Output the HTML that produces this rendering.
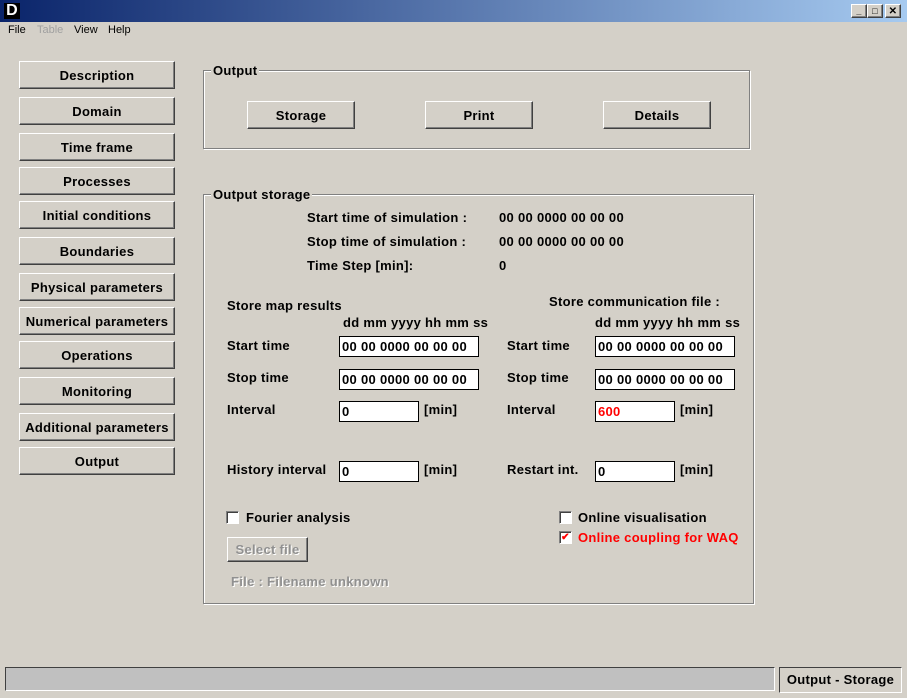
<html><head><style>
body{margin:0;width:907px;height:698px;background:#d4d0c8;font-family:"Liberation Sans",sans-serif;font-size:13px;font-weight:bold;position:relative;overflow:hidden;letter-spacing:0.3px}
.a{position:absolute;white-space:nowrap}
.btn{position:absolute;box-sizing:border-box;background:#d4d0c8;border:1px solid;border-color:#fff #404040 #404040 #fff;box-shadow:inset -1px -1px #808080;text-align:center;display:flex;align-items:center;justify-content:center}
.grp{position:absolute;border:1px solid #808080;box-shadow:1px 1px #fff, inset 1px 1px #fff}
.lg{position:absolute;top:-8px;left:7px;background:#d4d0c8;padding:0 2px}
.in{position:absolute;box-sizing:border-box;background:#fff;border:1px solid #000;height:21px;padding:2px 2px;line-height:15px}
.cb{position:absolute;width:13px;height:13px;box-sizing:border-box;background:#fff;border:1px solid;border-color:#808080 #fff #fff #808080;box-shadow:inset 1px 1px #404040}
</style></head><body>
<div class="a" style="left:0;top:0;width:907px;height:22px;background:linear-gradient(90deg,#0a246a,#a6caf0)"></div>
<div class="a" style="left:4px;top:3px;width:16px;height:16px;background:#000;color:#fff;font-size:16px;line-height:16px;text-align:center">D</div>
<div class="btn" style="left:851px;top:4px;width:16px;height:14px;font-size:9px">_</div>
<div class="btn" style="left:867px;top:4px;width:16px;height:14px;font-size:9px">□</div>
<div class="btn" style="left:885px;top:4px;width:16px;height:14px;font-size:10px">✕</div>
<div class="a" style="left:8px;top:24px;font-weight:normal;font-size:11px;letter-spacing:0">File</div>
<div class="a" style="left:37px;top:24px;font-weight:normal;font-size:11px;color:#a0a0a0;letter-spacing:0">Table</div>
<div class="a" style="left:74px;top:24px;font-weight:normal;font-size:11px;letter-spacing:0">View</div>
<div class="a" style="left:108px;top:24px;font-weight:normal;font-size:11px;letter-spacing:0">Help</div>

<div class="btn" style="left:19px;top:61px;width:156px;height:28px">Description</div>
<div class="btn" style="left:19px;top:97px;width:156px;height:28px">Domain</div>
<div class="btn" style="left:19px;top:133px;width:156px;height:28px">Time frame</div>
<div class="btn" style="left:19px;top:167px;width:156px;height:28px">Processes</div>
<div class="btn" style="left:19px;top:201px;width:156px;height:28px">Initial conditions</div>
<div class="btn" style="left:19px;top:237px;width:156px;height:28px">Boundaries</div>
<div class="btn" style="left:19px;top:273px;width:156px;height:28px">Physical parameters</div>
<div class="btn" style="left:19px;top:307px;width:156px;height:28px">Numerical parameters</div>
<div class="btn" style="left:19px;top:341px;width:156px;height:28px">Operations</div>
<div class="btn" style="left:19px;top:377px;width:156px;height:28px">Monitoring</div>
<div class="btn" style="left:19px;top:413px;width:156px;height:28px">Additional parameters</div>
<div class="btn" style="left:19px;top:447px;width:156px;height:28px">Output</div>

<div class="grp" style="left:203px;top:70px;width:545px;height:77px"><span class="lg">Output</span></div>
<div class="btn" style="left:247px;top:101px;width:108px;height:28px">Storage</div>
<div class="btn" style="left:425px;top:101px;width:108px;height:28px">Print</div>
<div class="btn" style="left:603px;top:101px;width:108px;height:28px">Details</div>

<div class="grp" style="left:203px;top:194px;width:549px;height:408px"><span class="lg">Output storage</span></div>
<div class="a" style="left:307px;top:210px">Start time of simulation :</div>
<div class="a" style="left:499px;top:210px">00 00 0000 00 00 00</div>
<div class="a" style="left:307px;top:234px">Stop time of simulation :</div>
<div class="a" style="left:499px;top:234px">00 00 0000 00 00 00</div>
<div class="a" style="left:307px;top:258px">Time Step [min]:</div>
<div class="a" style="left:499px;top:258px">0</div>
<div class="a" style="left:227px;top:298px">Store map results</div>
<div class="a" style="left:549px;top:294px">Store communication file :</div>
<div class="a" style="left:343px;top:315px">dd mm yyyy hh mm ss</div>
<div class="a" style="left:595px;top:315px">dd mm yyyy hh mm ss</div>
<div class="a" style="left:227px;top:338px">Start time</div>
<div class="in" style="left:339px;top:336px;width:140px">00 00 0000 00 00 00</div>
<div class="a" style="left:507px;top:338px">Start time</div>
<div class="in" style="left:595px;top:336px;width:140px">00 00 0000 00 00 00</div>
<div class="a" style="left:227px;top:370px">Stop time</div>
<div class="in" style="left:339px;top:369px;width:140px">00 00 0000 00 00 00</div>
<div class="a" style="left:507px;top:370px">Stop time</div>
<div class="in" style="left:595px;top:369px;width:140px">00 00 0000 00 00 00</div>
<div class="a" style="left:227px;top:402px">Interval</div>
<div class="in" style="left:339px;top:401px;width:80px">0</div>
<div class="a" style="left:424px;top:402px">[min]</div>
<div class="a" style="left:507px;top:402px">Interval</div>
<div class="in" style="left:595px;top:401px;width:80px;color:#f00">600</div>
<div class="a" style="left:680px;top:402px">[min]</div>
<div class="a" style="left:227px;top:462px">History interval</div>
<div class="in" style="left:339px;top:461px;width:80px">0</div>
<div class="a" style="left:424px;top:462px">[min]</div>
<div class="a" style="left:507px;top:462px">Restart int.</div>
<div class="in" style="left:595px;top:461px;width:80px">0</div>
<div class="a" style="left:680px;top:462px">[min]</div>
<div class="cb" style="left:226px;top:511px"></div>
<div class="a" style="left:246px;top:510px">Fourier analysis</div>
<div class="cb" style="left:559px;top:511px"></div>
<div class="a" style="left:578px;top:510px">Online visualisation</div>
<div class="cb" style="left:559px;top:531px;color:#f00;font-size:10px;line-height:11px;text-align:center">✔</div>
<div class="a" style="left:578px;top:530px;color:#f00">Online coupling for WAQ</div>
<div class="btn" style="left:227px;top:537px;width:81px;height:25px;color:#909090;text-shadow:1px 1px #fff">Select file</div>
<div class="a" style="left:231px;top:574px;color:#909090;text-shadow:1px 1px #fff">File :  Filename unknown</div>

<div class="a" style="left:5px;top:667px;width:770px;height:24px;background:#c0c0c0;border:1px solid;border-color:#404040 #fff #fff #404040;box-sizing:border-box"></div>
<div class="a" style="left:779px;top:667px;width:123px;height:26px;border:1px solid;border-color:#404040 #fff #fff #404040;box-sizing:border-box;text-align:center;line-height:24px">Output - Storage</div>
</body></html>
